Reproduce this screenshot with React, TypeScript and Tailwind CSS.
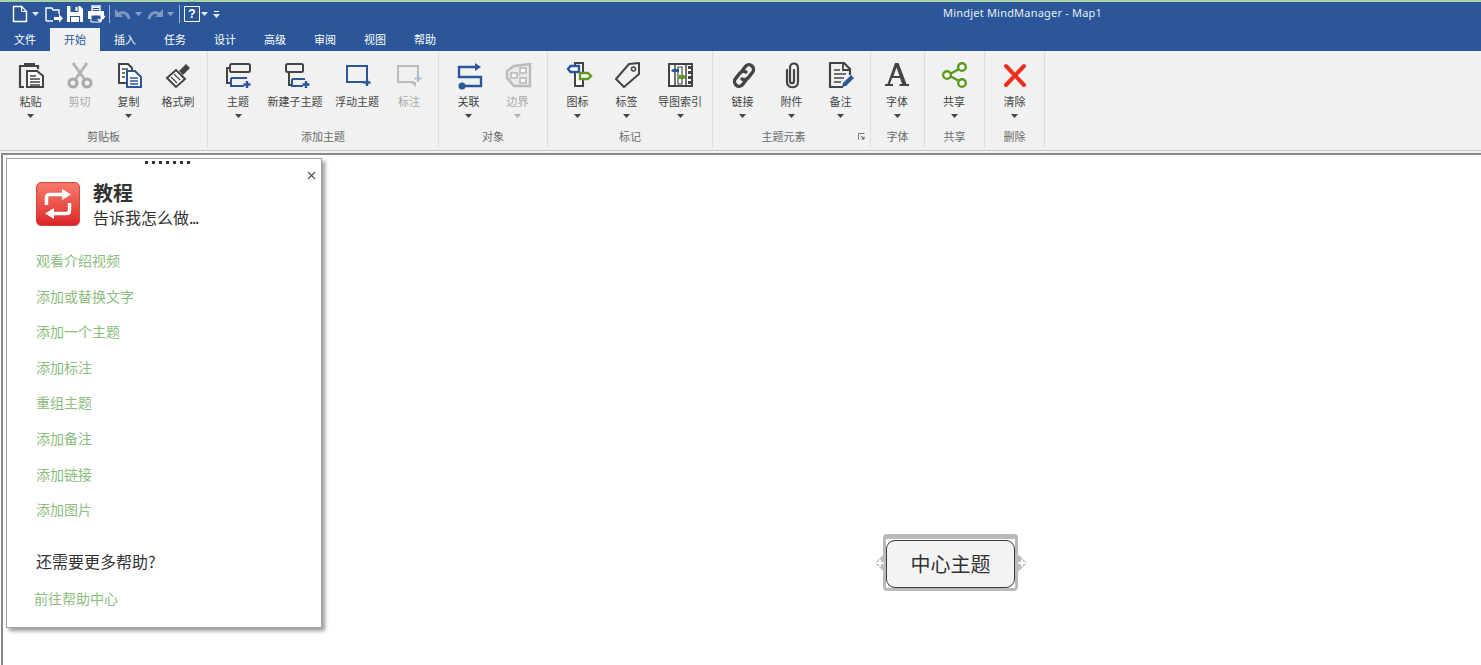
const cjk = { fontFamily: '"Noto Sans CJK SC", "Noto Sans", sans-serif' }

const BLUE = '#2b579a'
const DARK = '#444444'
const GRAY = '#a6a6a6'

const Caret = ({ color = '#444' }: { color?: string }) => (
  <svg width="7" height="4" viewBox="0 0 7 4"><path d="M0 0h7L3.5 4z" fill={color} /></svg>
)

const Svg = ({ children }: { children: React.ReactNode }) => (
  <svg width="32" height="32" viewBox="0 0 32 32" fill="none">{children}</svg>
)

const icons: Record<string, React.ReactNode> = {
  paste: (
    <Svg>
      <path d="M9 28H5V7h18v3" stroke={DARK} strokeWidth="2.2" />
      <rect x="9" y="4" width="11" height="4" fill={DARK} />
      <path d="M12 12h10l6 5v11H12z" stroke={DARK} strokeWidth="2" fill="#fff" />
      <path d="M15 17h6M15 20h10M15 23h10M15 26h10" stroke={DARK} strokeWidth="1.5" />
    </Svg>
  ),
  cut: (
    <Svg>
      <path d="M9 4l12 17M23 4L11 21" stroke="#9a9a9a" strokeWidth="3" />
      <circle cx="9" cy="24" r="4" stroke="#8c8c8c" strokeWidth="3" />
      <circle cx="23" cy="24" r="4" stroke="#8c8c8c" strokeWidth="3" />
    </Svg>
  ),
  copy: (
    <Svg>
      <path d="M6 5h9l4 4v3h-5v12H6z" fill="#fff" stroke={DARK} strokeWidth="2" />
      <path d="M9 10h6M9 14h3M9 18h3" stroke={DARK} strokeWidth="1.5" />
      <path d="M14 12h8l6 6v10H14z" fill="#fff" stroke={BLUE} strokeWidth="2" />
      <path d="M17 19h8M17 22h8M17 25h8" stroke={BLUE} strokeWidth="1.5" />
    </Svg>
  ),
  brush: (
    <Svg>
      <path d="M5 19L14 11l9 9-9 8z" fill="#fff" stroke={DARK} strokeWidth="2" />
      <path d="M9 18l6 6M12 15l6 6" stroke={DARK} strokeWidth="1.2" />
      <path d="M17 12l7-7 4 4-7 7z" fill={DARK} />
    </Svg>
  ),
  topic: (
    <Svg>
      <rect x="8" y="5" width="20" height="8" rx="1.5" stroke={DARK} strokeWidth="2" />
      <path d="M8 9H5v15h4" stroke={DARK} strokeWidth="2" />
      <path d="M9 19h16M9 19v8h13" stroke={BLUE} strokeWidth="2" />
      <path d="M25 22v7M21.5 25.5h7" stroke={BLUE} strokeWidth="2.4" />
    </Svg>
  ),
  subtopic: (
    <Svg>
      <rect x="7" y="5" width="17" height="8" rx="1.5" stroke={DARK} strokeWidth="2" />
      <path d="M10 13v13h3" stroke={DARK} strokeWidth="2" />
      <path d="M13 20h13M13 20v7h11" stroke={BLUE} strokeWidth="2" />
      <path d="M27 22v7M23.5 25.5h7" stroke={BLUE} strokeWidth="2.4" />
    </Svg>
  ),
  floating: (
    <Svg>
      <path d="M23 23H6V7h20v13" stroke={BLUE} strokeWidth="2" />
      <path d="M26 20v7M22.5 23.5h7" stroke={BLUE} strokeWidth="2.4" />
    </Svg>
  ),
  callout: (
    <Svg>
      <path d="M21 23H5V7h20v10" stroke={GRAY} strokeWidth="2" />
      <path d="M17 23h6v5z" fill={GRAY} />
      <path d="M25 16v7M21.5 19.5h7" stroke="#8fa6c6" strokeWidth="2.2" />
    </Svg>
  ),
  relation: (
    <Svg>
      <path d="M24 8H6v10h22v9H10" stroke={BLUE} strokeWidth="2.4" />
      <path d="M22 4l6 4-6 4z" fill={BLUE} />
      <circle cx="9" cy="27" r="3.5" fill={BLUE} />
    </Svg>
  ),
  boundary: (
    <Svg>
      <path d="M28 5v22H12L5 19v-7l7-5z" fill="#e8e8e8" stroke="#a3a3a3" strokeWidth="2.4" />
      <rect x="9" y="14" width="6" height="5" stroke="#a3a3a3" strokeWidth="1.6" fill="#fff" />
      <rect x="18" y="9" width="6" height="5" stroke="#a3a3a3" strokeWidth="1.6" fill="#fff" />
      <rect x="18" y="19" width="6" height="5" stroke="#a3a3a3" strokeWidth="1.6" fill="#fff" />
      <path d="M15 16h3" stroke="#a3a3a3" strokeWidth="1.2" />
    </Svg>
  ),
  icon: (
    <Svg>
      <path d="M13 4h8v23h-8z" fill="#fff" stroke={DARK} strokeWidth="2" />
      <path d="M6 10l2.5-3H17v6H8.5z" fill="#fff" stroke={BLUE} strokeWidth="2.4" />
      <path d="M18 14h8l3 3-3 3h-8z" fill="#fff" stroke="#5b9a1b" strokeWidth="2.4" />
    </Svg>
  ),
  tag: (
    <Svg>
      <path d="M28 4v11L13 28 5 20 18 5z" stroke={DARK} strokeWidth="2" strokeLinejoin="round" />
      <circle cx="22.5" cy="10" r="2" stroke={DARK} strokeWidth="1.5" />
    </Svg>
  ),
  mapIndex: (
    <Svg>
      <rect x="5" y="5" width="23" height="22" stroke={DARK} strokeWidth="2" fill="#fff" />
      <path d="M11 5v22M22 5v22" stroke={DARK} strokeWidth="1.5" />
      <path d="M14 8h4v17h-4z" stroke={DARK} strokeWidth="1.2" />
      <path d="M7 12l2-2h6v3H9z" fill={BLUE} />
      <path d="M15 16h5l2 2-2 2h-5z" fill="#5b9a1b" />
      <path d="M24 7h3v3h-3zM24 12h3v3h-3zM24 17h3v3h-3zM24 22h3v3h-3z" fill={DARK} />
    </Svg>
  ),
  link: (
    <Svg>
      <path d="M15 12l3-4c2-3 5-3 7-1s2 5 0 7l-4 5c-2 2-4 2-6 1" stroke={DARK} strokeWidth="3.4" strokeLinecap="round" />
      <path d="M19 21l-3 4c-2 3-5 3-7 1s-2-5 0-7l4-5c2-2 4-2 6-1" stroke={DARK} strokeWidth="3.4" strokeLinecap="round" />
    </Svg>
  ),
  attach: (
    <Svg>
      <path d="M11 11v12c0 7 11 7 11 0V9c0-6-8-6-8 0v13c0 3 4 3 4 0V11" stroke={DARK} strokeWidth="2.2" strokeLinecap="round" />
    </Svg>
  ),
  note: (
    <Svg>
      <path d="M18 28H5V4h14l6 6v6" stroke={DARK} strokeWidth="2.2" />
      <path d="M18 4v7h7" stroke={DARK} strokeWidth="1.8" />
      <path d="M9 11h6M9 15h12M9 19h10M9 23h7" stroke={DARK} strokeWidth="1.6" />
      <path d="M17 28l1-4 8-8 3 3-8 8z" fill={BLUE} />
    </Svg>
  ),
  font: (
    <Svg>
      <path d="M14 4h3.5l8 21H28v2h-9.5v-2H21l-2-6h-8l-2 6H12v2H4v-2h2.5zM12.5 17h6l-3-8.5z" fill={DARK} fillRule="evenodd" />
    </Svg>
  ),
  share: (
    <Svg>
      <path d="M10 16l13-7M10 16l13 7" stroke="#5b9a1b" strokeWidth="2.4" />
      <circle cx="9" cy="16" r="3.8" fill="#fff" stroke="#5b9a1b" strokeWidth="2.4" />
      <circle cx="24" cy="8" r="3.8" fill="#fff" stroke="#5b9a1b" strokeWidth="2.4" />
      <circle cx="24" cy="24" r="3.8" fill="#fff" stroke="#5b9a1b" strokeWidth="2.4" />
    </Svg>
  ),
  clear: (
    <Svg>
      <path d="M7 7l18 19M25 7L7 26" stroke="#ee2f1c" strokeWidth="4" strokeLinecap="round" />
    </Svg>
  ),
}

interface RibbonItem {
  icon: string
  label: string
  width: string
  caret?: boolean
  disabled?: boolean
}

const groups: { name: string; width: string; pad: string; launcher?: boolean; items: RibbonItem[] }[] = [
  {
    name: '剪贴板', width: 'w-[208px]', pad: 'pl-[6px]',
    items: [
      { icon: 'paste', label: '粘贴', width: 'w-[49px]', caret: true },
      { icon: 'cut', label: '剪切', width: 'w-[49px]', disabled: true },
      { icon: 'copy', label: '复制', width: 'w-[49px]', caret: true },
      { icon: 'brush', label: '格式刷', width: 'w-[50px]' },
    ],
  },
  {
    name: '添加主题', width: 'w-[231px]', pad: 'pl-[5px]',
    items: [
      { icon: 'topic', label: '主题', width: 'w-[50px]', caret: true },
      { icon: 'subtopic', label: '新建子主题', width: 'w-[64px]' },
      { icon: 'floating', label: '浮动主题', width: 'w-[60px]' },
      { icon: 'callout', label: '标注', width: 'w-[44px]', disabled: true },
    ],
  },
  {
    name: '对象', width: 'w-[109px]', pad: 'pl-[5px]',
    items: [
      { icon: 'relation', label: '关联', width: 'w-[49px]', caret: true },
      { icon: 'boundary', label: '边界', width: 'w-[49px]', caret: true, disabled: true },
    ],
  },
  {
    name: '标记', width: 'w-[165px]', pad: 'pl-[5px]',
    items: [
      { icon: 'icon', label: '图标', width: 'w-[49px]', caret: true },
      { icon: 'tag', label: '标签', width: 'w-[49px]', caret: true },
      { icon: 'mapIndex', label: '导图索引', width: 'w-[58px]', caret: true },
    ],
  },
  {
    name: '主题元素', width: 'w-[158px]', pad: 'pl-[5px]', launcher: true,
    items: [
      { icon: 'link', label: '链接', width: 'w-[49px]', caret: true },
      { icon: 'attach', label: '附件', width: 'w-[49px]', caret: true },
      { icon: 'note', label: '备注', width: 'w-[49px]', caret: true },
    ],
  },
  {
    name: '字体', width: 'w-[54px]', pad: 'pl-0',
    items: [{ icon: 'font', label: '字体', width: 'w-[52px]', caret: true }],
  },
  {
    name: '共享', width: 'w-[60px]', pad: 'pl-0',
    items: [{ icon: 'share', label: '共享', width: 'w-[58px]', caret: true }],
  },
  {
    name: '删除', width: 'w-[60px]', pad: 'pl-0',
    items: [{ icon: 'clear', label: '清除', width: 'w-[59px]', caret: true }],
  },
]

const tabs = ['文件', '开始', '插入', '任务', '设计', '高级', '审阅', '视图', '帮助']

const links = ['观看介绍视频', '添加或替换文字', '添加一个主题', '添加标注', '重组主题', '添加备注', '添加链接', '添加图片']

function QuickAccess() {
  return (
    <div className="flex items-center h-[24px]">
      <svg className="ml-[11px]" width="18" height="18" viewBox="0 0 18 18" fill="none">
        <path d="M2.5 1.5h8l5 5v10h-13z" stroke="#fff" strokeWidth="1.4" />
        <path d="M10.5 1.5v5h5" stroke="#fff" />
      </svg>
      <span className="ml-[3px]"><Caret color="#e8edf5" /></span>
      <svg className="ml-[5px]" width="20" height="18" viewBox="0 0 20 18" fill="none">
        <path d="M2 16V3h6l1 2h6v4" stroke="#fff" strokeWidth="1.4" />
        <path d="M2 16h7" stroke="#fff" strokeWidth="1.4" />
        <path d="M10 12h5V9l4 4.5-4 4V15h-5z" fill="#fff" />
      </svg>
      <svg className="ml-[2px]" width="18" height="18" viewBox="0 0 18 18">
        <path d="M1 1h13l3 3v13H1z" fill="#fff" />
        <path d="M4.5 1h8v6h-8zM4 11h10v6H4z" fill="#2b579a" />
        <path d="M9.5 2h2v4h-2z" fill="#fff" />
        <path d="M5 12h8v5H5z" fill="#fff" />
      </svg>
      <svg className="ml-[3px]" width="19" height="18" viewBox="0 0 19 18" fill="none">
        <path d="M5 6V1h8v5" stroke="#fff" strokeWidth="1.4" />
        <path d="M1 6h16v8H1z" fill="#fff" />
        <path d="M4 10h10v7H4z" fill="#2b579a" stroke="#fff" />
        <path d="M6 2.5h6M6 4.5h6" stroke="#fff" />
        <path d="M11 14l2 2 5-5" stroke="#fff" strokeWidth="1.6" />
      </svg>
      <div className="ml-[3px] w-px h-[18px] bg-[#9db3d4]" />
      <svg className="ml-[4px]" width="17" height="14" viewBox="0 0 17 14" fill="none">
        <path d="M15 12C14 5 7 4 4 8" stroke="#7f97bd" strokeWidth="3" />
        <path d="M1 2v8h8z" fill="#7f97bd" />
      </svg>
      <span className="ml-[4px]"><Caret color="#8ea4c6" /></span>
      <svg className="ml-[5px]" width="17" height="14" viewBox="0 0 17 14" fill="none">
        <path d="M2 12C3 5 10 4 13 8" stroke="#7f97bd" strokeWidth="3" />
        <path d="M16 2v8H8z" fill="#7f97bd" />
      </svg>
      <span className="ml-[3px]"><Caret color="#8ea4c6" /></span>
      <div className="ml-[5px] w-px h-[18px] bg-[#9db3d4]" />
      <div className="ml-[4px] w-[16px] h-[16px] border border-white flex items-center justify-center text-white text-[12px] font-bold leading-none" style={{ fontFamily: '"Liberation Sans", sans-serif' }}>?</div>
      <span className="ml-[1px]"><Caret color="#e8edf5" /></span>
      <div className="ml-[5px] flex flex-col items-center gap-[2px]">
        <div className="w-[5px] h-px bg-white" />
        <Caret color="#e8edf5" />
      </div>
    </div>
  )
}

function RibbonButton({ item }: { item: RibbonItem }) {
  return (
    <div className={`${item.width} flex flex-col items-center shrink-0`}>
      <div className={`h-[32px] flex items-center justify-center ${item.disabled ? 'opacity-70' : ''}`}>
        {icons[item.icon]}
      </div>
      <div className={`mt-[2px] text-[11px] leading-[16px] whitespace-nowrap ${item.disabled ? 'text-[#a8a8a8]' : 'text-[#444]'}`}>
        {item.label}
      </div>
      {item.caret && (
        <div className="mt-[5px] leading-none flex">
          <Caret color={item.disabled ? '#b0b0b0' : '#444'} />
        </div>
      )}
    </div>
  )
}

function Ribbon() {
  return (
    <div className="h-[99px] bg-[#f1f1f1] flex" style={cjk}>
      {groups.map((group) => (
        <div key={group.name} className={`${group.width} h-[96px] flex flex-col border-r border-[#dcdcdc] shrink-0`}>
          <div className={`${group.pad} flex h-[77px] pt-[8px]`}>
            {group.items.map((item) => (
              <RibbonButton key={item.label} item={item} />
            ))}
          </div>
          <div className={`relative h-[16px] text-center text-[11px] leading-[16px] text-[#6a6a6a] ${group.launcher ? 'pr-[16px]' : ''}`}>
            {group.name}
            {group.launcher && (
              <svg className="absolute right-[5px] top-[5px]" width="7" height="7" viewBox="0 0 7 7" fill="none">
                <path d="M.5 6.5V.5h6" stroke="#777" />
                <path d="M3 3l3 3M6 3.5V6H3.5" stroke="#555" />
              </svg>
            )}
          </div>
        </div>
      ))}
    </div>
  )
}

function TutorialPanel() {
  return (
    <div className="absolute left-[3px] top-[3px] w-[316px] h-[470px] bg-white border border-[#a3a3a3] shadow-[3px_3px_4px_rgba(0,0,0,0.4)] flex flex-col">
      <div className="absolute left-[138px] top-[2px] flex gap-[4px]">
        {[0, 1, 2, 3, 4, 5, 6].map((i) => (
          <div key={i} className="w-[3px] h-[3px] bg-[#333]" />
        ))}
      </div>
      <svg className="absolute right-[5px] top-[12px]" width="9" height="9" viewBox="0 0 9 9" fill="none">
        <path d="M1 1l7 7M8 1L1 8" stroke="#555" strokeWidth="1.2" />
      </svg>

      <div className="flex pl-[29px] pt-[23px]">
        <div className="w-[44px] h-[44px] rounded-[5px] bg-gradient-to-b from-[#f6786a] to-[#dd1f27] border border-[#d8453f] flex items-center justify-center">
          <svg width="30" height="30" viewBox="0 0 30 30" fill="none">
            <path d="M3.5 16V8.5c0-2 1-3 3-3H20" stroke="#fff" strokeWidth="3.5" />
            <path d="M19 0l9 5.5-9 5.5z" fill="#fff" />
            <path d="M26.5 14v7.5c0 2-1 3-3 3H10" stroke="#fff" strokeWidth="3.5" />
            <path d="M11 19l-9 5.5 9 5.5z" fill="#fff" />
          </svg>
        </div>
        <div className="ml-[13px] -mt-[1px]">
          <div className="text-[20px] leading-[24px] font-bold text-[#333]">教程</div>
          <div className="text-[16px] leading-[24px] text-[#333]">告诉我怎么做<span className="tracking-[-1.5px]">...</span></div>
        </div>
      </div>

      <div className="mt-[21px] flex flex-col pl-[29px] gap-[15.6px]">
        {links.map((text) => (
          <div key={text} className="text-[14px] leading-[20px] text-[#8cbd7e]">{text}</div>
        ))}
      </div>

      <div className="mt-[31px] pl-[29px] text-[16px] leading-[22px] text-[#333]">还需要更多帮助?</div>
      <div className="mt-[16px] pl-[27px] text-[14px] leading-[20px] text-[#8cbd7e]">前往帮助中心</div>
    </div>
  )
}

function Handle({ side }: { side: 'left' | 'right' }) {
  return (
    <>
      <div className={`absolute top-[17px] w-[14px] h-[14px] rotate-45 rounded-[2px] bg-[#bdbdbd] ${side === 'left' ? 'left-[-8px]' : 'right-[-9px]'}`} />
      <svg
        className={`absolute top-[20px] ${side === 'left' ? 'left-[-10px]' : 'right-[-11px]'}`}
        width="8"
        height="8"
        viewBox="0 0 8 8"
      >
        <path d="M4 .5v7M.5 4h7" stroke="#fff" strokeWidth="2" />
      </svg>
    </>
  )
}

function CentralTopic() {
  return (
    <div className="absolute left-[880px] top-[379px] w-[135px] h-[57px] border-t-[5px] border-x-[3px] border-b-[3px] border-[#b9b9b9] rounded-[4px] pt-[1px]">
      <Handle side="left" />
      <Handle side="right" />
      <div className="relative w-[129px] h-[48px] bg-[#f3f3f3] border border-[#3a3a3a] rounded-[9px] flex items-center justify-center text-[20px] text-[#333]">
        中心主题
      </div>
    </div>
  )
}

export default function App() {
  return (
    <div className="w-[1481px] h-[665px] overflow-hidden bg-white flex flex-col" style={cjk}>
      <div className="h-[28px] bg-[#2b579a] border-t-[2px] border-[#a9d3a5] flex items-start shrink-0">
        <QuickAccess />
        <div className="ml-auto mr-[379px] mt-[2px] text-[11px] leading-[18px] text-[#e6ecf5] tracking-[0.2px]" style={{ fontFamily: '"Noto Sans", sans-serif' }}>
          Mindjet MindManager - Map1
        </div>
      </div>
      <div className="h-[23px] bg-[#2b579a] flex shrink-0">
        {tabs.map((tab) => (
          <div
            key={tab}
            className={`w-[50px] text-center text-[11px] leading-[23px] ${tab === '开始' ? 'bg-[#f1f1f1] text-[#2b579a]' : 'text-white'}`}
          >
            {tab}
          </div>
        ))}
      </div>
      <Ribbon />
      <div className="h-[1px] bg-[#c4c4c4] shrink-0" />
      <div className="h-[2px] bg-[#f4f4f4] shrink-0" />
      <div className="relative flex-1 ml-[1px] border-l-[2px] border-t-[2px] border-[#8a8a8a] bg-white">
        <TutorialPanel />
        <CentralTopic />
      </div>
    </div>
  )
}
